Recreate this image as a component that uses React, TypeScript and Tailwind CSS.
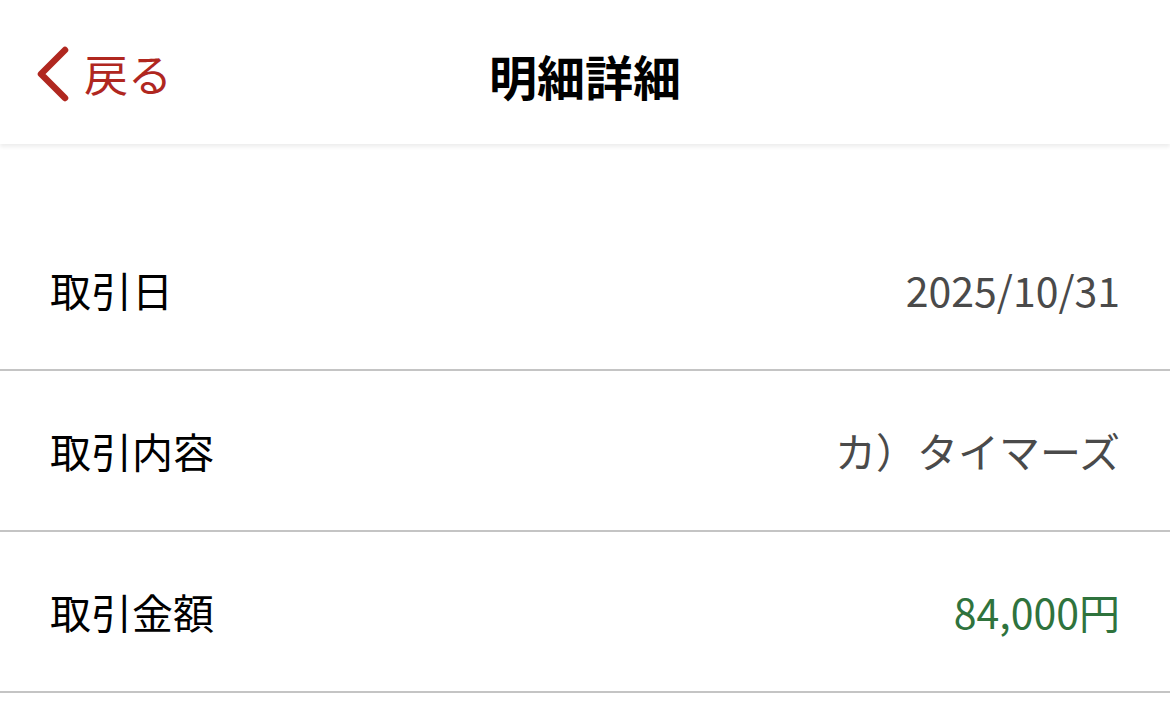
import React from 'react'

const rows = [
  { label: '取引日', value: '2025/10/31', tone: 'text-[#4a4a4a]' },
  { label: '取引内容', value: 'カ）タイマーズ', tone: 'text-[#4a4a4a]' },
  { label: '取引金額', value: '84,000円', tone: 'text-[#2f733d]' },
]

function BackChevron() {
  return (
    <svg width="40" height="60" viewBox="0 0 40 60" fill="none" className="shrink-0">
      <polyline
        points="31,5 7,29 31,53"
        stroke="#b0271f"
        strokeWidth="6.5"
        strokeLinecap="round"
        strokeLinejoin="round"
      />
    </svg>
  )
}

export default function App() {
  return (
    <div className="w-[1170px] h-[702px] overflow-hidden bg-white font-['Noto_Sans_CJK_JP','Noto_Sans',sans-serif]">
      <header className="relative z-10 h-[144px] grid grid-cols-[1fr_auto_1fr] items-center bg-white shadow-[0_3px_4px_rgba(0,0,0,0.07)]">
        <button className="flex items-center gap-[10px] pl-[34px] pt-[6px] text-[#b0271f] text-[44px] leading-none">
          <BackChevron />
          <span className="-mt-[4px]">戻る</span>
        </button>
        <h1 className="text-[48px] font-bold text-black leading-none pt-[6px]">明細詳細</h1>
        <div />
      </header>

      <main className="mt-[66px]">
        {rows.map((r) => (
          <div
            key={r.label}
            className="h-[161px] flex items-center justify-between px-[50px] border-b-2 border-[#c4c4c4]"
          >
            <span className="text-[41px] text-black leading-none">{r.label}</span>
            <span className={`text-[41px] leading-none ${r.tone}`}>{r.value}</span>
          </div>
        ))}
      </main>
    </div>
  )
}
